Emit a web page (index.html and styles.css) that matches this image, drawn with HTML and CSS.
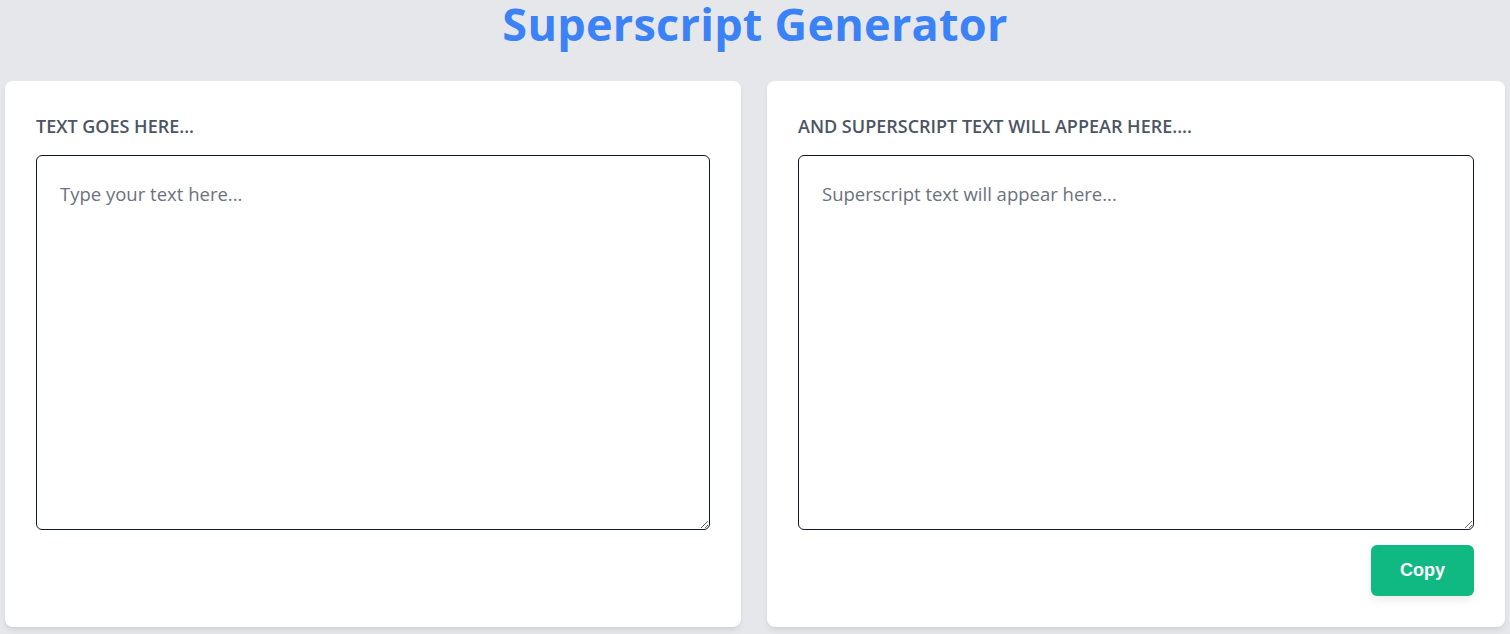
FILE: index.html
```html
<!DOCTYPE html>
<html lang="en">
<head>
<meta charset="utf-8">
<title>Superscript Generator</title>
<link rel="stylesheet" href="styles.css">
</head>
<body>
  <main class="page">
    <h1 class="title">Superscript Generator</h1>
    <div class="panels">
      <section class="card">
        <label class="card-label" for="source">Text goes here...</label>
        <textarea id="source" class="field" placeholder="Type your text here..."></textarea>
      </section>
      <section class="card">
        <label class="card-label" for="result">And superscript text will appear here....</label>
        <textarea id="result" class="field" placeholder="Superscript text will appear here..." readonly></textarea>
        <div class="actions">
          <button class="copy-btn" type="button">Copy</button>
        </div>
      </section>
    </div>
  </main>
</body>
</html>
```

FILE: styles.css
```css
* {
  box-sizing: border-box;
}

html, body {
  margin: 0;
  padding: 0;
}

body {
  background: #e5e7eb;
  font-family: "Open Sans", "Noto Sans", sans-serif;
  color: #374151;
}

.page {
  padding: 0 5px 7px;
}

.title {
  margin: 0;
  height: 81px;
  text-align: center;
  font-size: 45px;
  line-height: 47px;
  letter-spacing: 0.25px;
  font-weight: 700;
  color: #3b82f6;
}

.panels {
  display: grid;
  grid-template-columns: 736px 738px;
  column-gap: 26px;
}

.card {
  background: #ffffff;
  border-radius: 8px;
  box-shadow: 0 4px 6px -1px rgba(0, 0, 0, 0.08), 0 2px 4px -2px rgba(0, 0, 0, 0.06);
  padding: 31px;
  display: flex;
  flex-direction: column;
  height: 546px;
}

.card-label {
  display: block;
  padding-top: 2px;
  font-size: 18px;
  line-height: 24px;
  font-weight: 600;
  text-transform: uppercase;
  color: #4b5563;
  margin-bottom: 17px;
}

.field {
  display: block;
  width: 100%;
  height: 375px;
  border: 1px solid #111827;
  border-radius: 6px;
  padding: 24px 23px;
  font-family: "Open Sans", "Noto Sans", sans-serif;
  font-size: 18.5px;
  line-height: 28px;
  color: #111827;
  background: #fff;
  outline: none;
}

.field::placeholder {
  color: #6b7280;
}

.actions {
  display: flex;
  justify-content: flex-end;
  margin-top: 15px;
}

.copy-btn {
  width: 103px;
  height: 51px;
  border: none;
  border-radius: 6px;
  background: #10b981;
  color: #ffffff;
  font-family: "Liberation Sans", Arial, sans-serif;
  font-size: 18px;
  font-weight: 700;
  box-shadow: 0 4px 8px rgba(0, 0, 0, 0.08);
  cursor: pointer;
}
```
